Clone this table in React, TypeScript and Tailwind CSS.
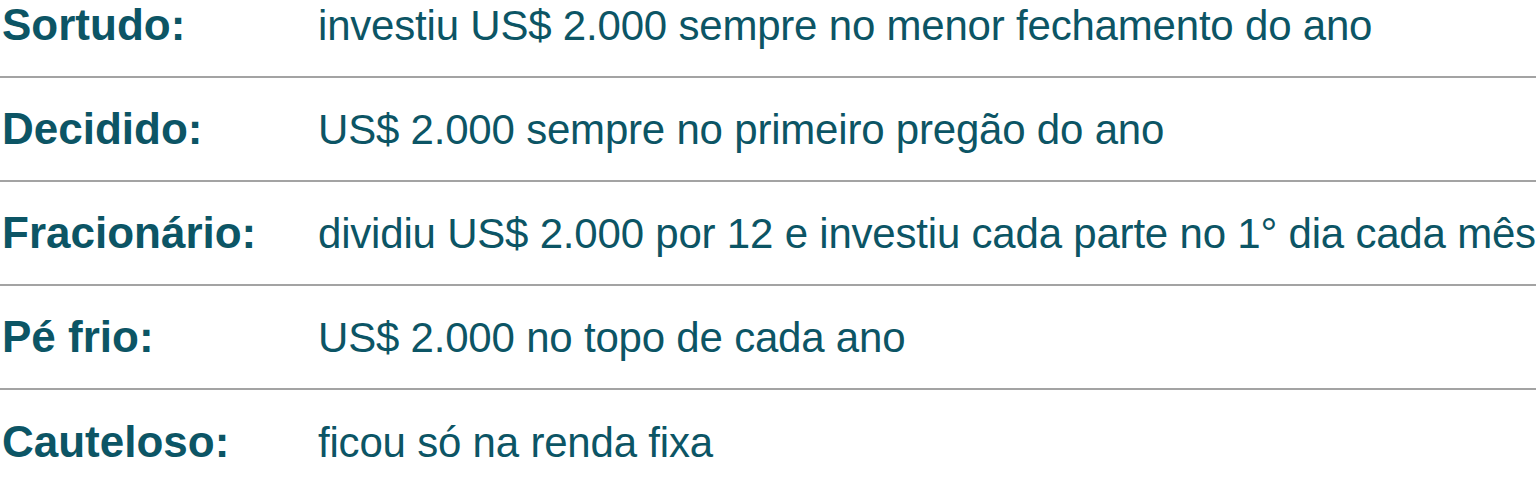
const rows = [
  { label: 'Sortudo:', text: 'investiu US$ 2.000 sempre no menor fechamento do ano' },
  { label: 'Decidido:', text: 'US$ 2.000 sempre no primeiro pregão do ano' },
  { label: 'Fracionário:', text: 'dividiu US$ 2.000 por 12 e investiu cada parte no 1° dia cada mês' },
  { label: 'Pé frio:', text: 'US$ 2.000 no topo de cada ano' },
  { label: 'Cauteloso:', text: 'ficou só na renda fixa' },
]

export default function App() {
  return (
    <div className="h-[481px] overflow-hidden bg-white font-['Liberation_Sans',Arial,sans-serif] text-[#0c5565]">
      <div className="-mt-[26px]">
        {rows.map((row) => (
          <div
            key={row.label}
            className="flex h-[104px] items-center border-b-2 border-[#a3a3a3] last:border-b-0"
          >
            <div className="w-[318px] shrink-0 pl-[2px] text-[44px] font-bold">{row.label}</div>
            <div className="whitespace-nowrap text-[42px] tracking-[-0.2px]">{row.text}</div>
          </div>
        ))}
      </div>
    </div>
  )
}
